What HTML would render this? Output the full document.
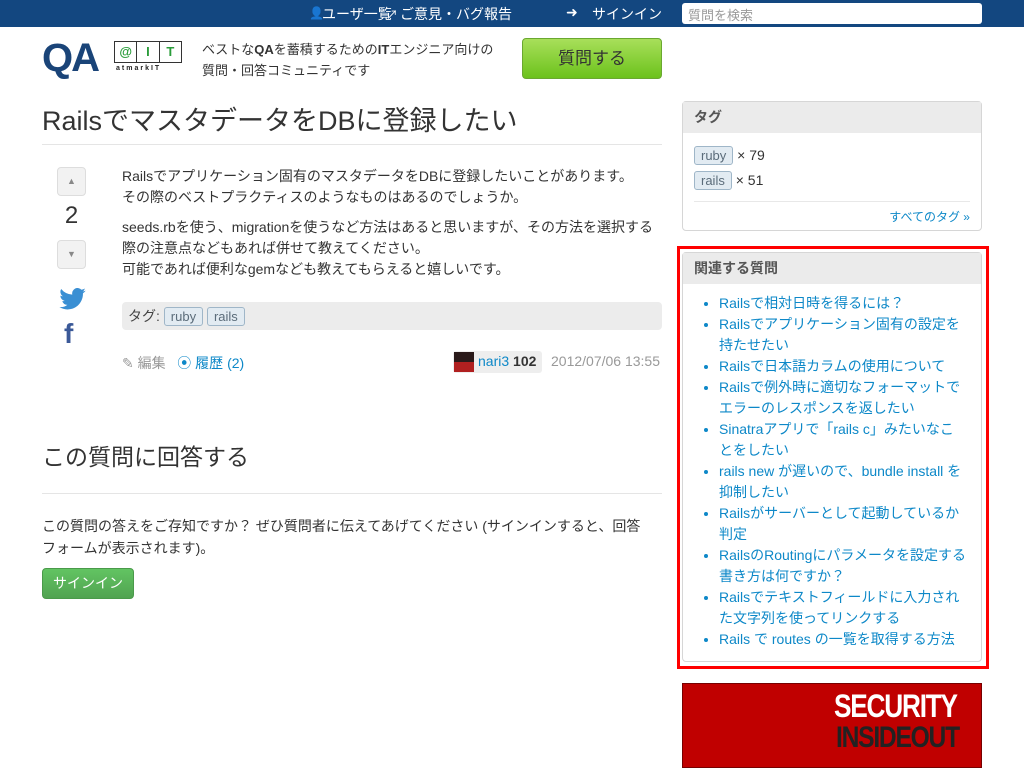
<!DOCTYPE html>
<html><head><meta charset="utf-8"><style>
*{box-sizing:border-box;margin:0;padding:0}
body{width:1024px;height:768px;overflow:hidden;background:#fff;font-family:"Liberation Sans","Noto Sans CJK JP",sans-serif;color:#333;font-size:14px;position:relative}
a{color:#0d88c8;text-decoration:none}
.top{position:absolute;left:0;top:0;width:1024px;height:27px;background:#134780}
.top span{position:absolute;top:4px;color:#fff;font-size:14px;white-space:nowrap}
.search{position:absolute;left:682px;top:3px;width:300px;height:21px;background:#fff;border-radius:3px;color:#999;font-size:13px;padding:2px 6px}
.abs{position:absolute}
.tag{display:inline-block;border:1px solid #9fb6c8;background:#e2ebf2;color:#5b6c7a;border-radius:3px;padding:0 6px;font-size:13px;line-height:17px}
.vote{position:absolute;left:57px;width:29px;height:29px;border:1px solid #ddd;border-radius:4px;background:#f2f2f2;color:#888;font-size:9px;text-align:center;line-height:27px}
.box{position:absolute;left:682px;width:300px;border:1px solid #d6d6d6;border-radius:4px;background:#fff}
.box h4{background:#ebebeb;height:31px;line-height:31px;padding-left:11px;font-size:14px;color:#555}
ul.rel{list-style:disc;padding-left:36px;padding-right:14px;padding-top:9px;font-size:14px;line-height:21px}
ul.rel li{color:#0d88c8}
</style></head><body>
<div class="top">
<span style="left:309px;font-size:12px;top:6px">&#128100;</span><span style="left:322px">ユーザ一覧</span>
<span style="left:386px;font-size:12px;top:6px">&#8599;</span><span style="left:400px">ご意見・バグ報告</span>
<span style="left:566px">&#10140;</span><span style="left:592px">サインイン</span>
<div class="search">質問を検索</div>
</div>
<div class="abs" style="left:42px;top:38px;font:bold 40px 'Liberation Sans',sans-serif;color:#1a4478;letter-spacing:-2px;line-height:40px">QA</div>
<div class="abs" style="left:114px;top:41px;width:68px;height:22px;border:1px solid #333;display:flex">
<div style="flex:1;border-right:1px solid #333;color:#2a9c3a;font:bold 13px sans-serif;text-align:center;line-height:20px">@</div>
<div style="flex:1;border-right:1px solid #333;color:#2a9c3a;font:bold 13px sans-serif;text-align:center;line-height:20px">I</div>
<div style="flex:1;color:#2a9c3a;font:bold 13px sans-serif;text-align:center;line-height:20px">T</div></div>
<div class="abs" style="left:116px;top:65px;font:bold 7px sans-serif;letter-spacing:2px;color:#222">atmarkIT</div>
<div class="abs" style="left:202px;top:39px;font-size:13px;line-height:21px;color:#333">ベストな<b>QA</b>を蓄積するための<b>IT</b>エンジニア向けの<br>質問・回答コミュニティです</div>
<div class="abs" style="left:522px;top:38px;width:140px;height:41px;border-radius:4px;background:linear-gradient(#a8df5a,#6cc21c);border:1px solid #6aa830;text-align:center;line-height:39px;font-size:17px;color:#333">質問する</div>

<div class="abs" style="left:42px;top:99px;font-size:27px;color:#333">Railsでマスタデータを<span>DB</span>に登録したい</div>
<div class="abs" style="left:42px;top:144px;width:620px;border-top:1px solid #e5e5e5"></div>

<div class="vote" style="top:167px">&#9650;</div>
<div class="abs" style="left:57px;top:202px;width:29px;text-align:center;font-size:24px;color:#333">2</div>
<div class="vote" style="top:240px">&#9660;</div>
<svg class="abs" style="left:58px;top:288px" width="29" height="22" viewBox="0 0 24 20"><path fill="#3a8fd3" d="M24 2.4a10 10 0 0 1-2.8.8A5 5 0 0 0 23.3.4a10 10 0 0 1-3.1 1.2A4.9 4.9 0 0 0 11.8 6 14 14 0 0 1 1.7.9a4.9 4.9 0 0 0 1.5 6.6 4.9 4.9 0 0 1-2.2-.6 4.9 4.9 0 0 0 3.9 4.9 5 5 0 0 1-2.2.1 4.9 4.9 0 0 0 4.6 3.4A9.9 9.9 0 0 1 0 17.3 14 14 0 0 0 7.5 19.5c9 0 14-7.5 14-14v-.6A10 10 0 0 0 24 2.4z"/></svg>
<div class="abs" style="left:64px;top:318px;font:bold 28px 'Liberation Sans',sans-serif;color:#3b5998">f</div>

<div class="abs" style="left:122px;top:166px;font-size:14px;line-height:21px;color:#333">Railsでアプリケーション固有のマスタデータをDBに登録したいことがあります。<br>その際のベストプラクティスのようなものはあるのでしょうか。</div>
<div class="abs" style="left:122px;top:217px;font-size:14px;line-height:21px;color:#333">seeds.rbを使う、migrationを使うなど方法はあると思いますが、その方法を選択する<br>際の注意点などもあれば併せて教えてください。<br>可能であれば便利なgemなども教えてもらえると嬉しいです。</div>
<div class="abs" style="left:122px;top:302px;width:540px;height:28px;background:#ececec;border-radius:4px;padding:4px 6px;font-size:14px;color:#444">タグ: <span class="tag">ruby</span> <span class="tag">rails</span></div>
<div class="abs" style="left:122px;top:353px;font-size:14px;color:#999">&#9998; 編集 &nbsp; <a style="color:#0d88c8">&#10687; 履歴 (2)</a></div>
<div class="abs" style="left:453px;top:351px;width:89px;height:22px;background:#eee;border-radius:3px"></div>
<div class="abs" style="left:454px;top:352px;width:20px;height:20px;background:linear-gradient(#2a1a1a 50%,#b02020 50%)"></div>
<div class="abs" style="left:478px;top:353px;font-size:14px"><a>nari3</a> <b style="color:#333">102</b></div>
<div class="abs" style="left:551px;top:353px;font-size:14px;color:#999">2012/07/06 13:55</div>

<div class="abs" style="left:42px;top:438px;font-size:23px;color:#333">この質問に回答する</div>
<div class="abs" style="left:42px;top:493px;width:620px;border-top:1px solid #e5e5e5"></div>
<div class="abs" style="left:42px;top:515px;font-size:14px;line-height:22px;color:#333">この質問の答えをご存知ですか？ ぜひ質問者に伝えてあげてください (サインインすると、回答<br>フォームが表示されます)。</div>
<div class="abs" style="left:42px;top:568px;width:92px;height:31px;border-radius:4px;background:linear-gradient(#62c462,#51a351);border:1px solid #4a9a4a;color:#fff;text-align:center;line-height:29px;font-size:14px">サインイン</div>

<div class="box" style="top:101px;height:130px"><h4>タグ</h4>
<div style="padding:10px 0 0 11px;line-height:25px;font-size:14px"><span class="tag">ruby</span> × 79<br><span class="tag">rails</span> × 51</div>
<div style="margin:8px 11px 0;border-top:1px solid #e8e8e8;text-align:right;padding-top:6px;font-size:12px"><a>すべてのタグ »</a></div></div>

<div class="abs" style="left:677px;top:246px;width:312px;height:423px;border:3px solid #f00"></div>
<div class="box" style="top:252px;height:410px"><h4>関連する質問</h4>
<ul class="rel">
<li><a>Railsで相対日時を得るには？</a></li>
<li><a>Railsでアプリケーション固有の設定を持たせたい</a></li>
<li><a>Railsで日本語カラムの使用について</a></li>
<li><a>Railsで例外時に適切なフォーマットでエラーのレスポンスを返したい</a></li>
<li><a>Sinatraアプリで「rails c」みたいなことをしたい</a></li>
<li><a>rails new が遅いので、bundle install を抑制したい</a></li>
<li><a>Railsがサーバーとして起動しているか判定</a></li>
<li><a>RailsのRoutingにパラメータを設定する書き方は何ですか？</a></li>
<li><a>Railsでテキストフィールドに入力された文字列を使ってリンクする</a></li>
<li><a>Rails で routes の一覧を取得する方法</a></li>
</ul></div>

<div class="abs" style="left:682px;top:683px;width:300px;height:85px;background:#c00000;border:1px solid #700"></div>
<div class="abs" style="left:834px;top:688px;font:bold 32px 'Liberation Sans',sans-serif;color:#fff;letter-spacing:-1.5px;transform:scaleX(.82);transform-origin:left">SECURITY</div>
<div class="abs" style="left:836px;top:721px;font:bold 30px 'Liberation Sans',sans-serif;color:#222;letter-spacing:-1.5px;transform:scaleX(.82);transform-origin:left">INSIDEOUT</div>
</body></html>
